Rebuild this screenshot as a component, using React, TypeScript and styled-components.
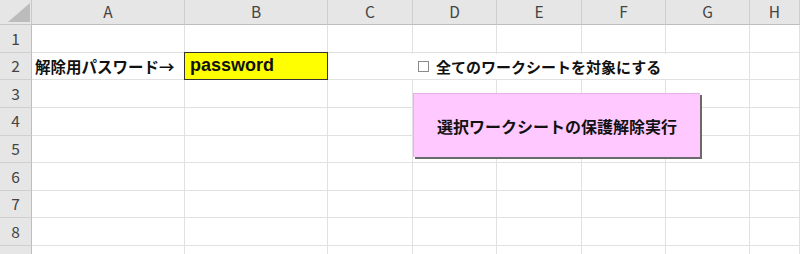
import React from 'react';
import styled, { createGlobalStyle } from 'styled-components';

const cols = ['A', 'B', 'C', 'D', 'E', 'F', 'G', 'H'];
const colWidths = [153, 143, 85, 84, 85, 84, 84, 50];
const rows = [1, 2, 3, 4, 5, 6, 7, 8, 9];

const GlobalStyle = createGlobalStyle`
  html, body {
    margin: 0;
    padding: 0;
    background: #ffffff;
    overflow: hidden;
  }
  body {
    font-family: "Noto Sans CJK JP", "Noto Sans", sans-serif;
  }
`;

export default function App() {
  return (
    <>
      <GlobalStyle />
      <Sheet>
        <Grid>
          <Corner>
            <svg width="32" height="25" viewBox="0 0 32 25">
              <polygon points="8,22 30,22 30,3" fill="#bcbcbc" />
            </svg>
          </Corner>
          {cols.map((c) => (
            <ColHead key={c}>{c}</ColHead>
          ))}
          {rows.map((r) => (
            <React.Fragment key={r}>
              <RowHead>{r}</RowHead>
              {cols.map((c) => {
                if (r === 2 && c === 'A') return <Cell key={c}><Label>解除用パスワード→</Label></Cell>;
                if (r === 2 && c === 'B') return <InputCell key={c}>password</InputCell>;
                return <Cell key={c} />;
              })}
            </React.Fragment>
          ))}
        </Grid>
        <CheckControl>
          <Box />
          <CheckText>全てのワークシートを対象にする</CheckText>
        </CheckControl>
        <RunButton>選択ワークシートの保護解除実行</RunButton>
      </Sheet>
    </>
  );
}

const Sheet = styled.div`
  position: relative;
  width: 800px;
  height: 254px;
  overflow: hidden;
  background: #ffffff;
`;

const Grid = styled.div`
  display: grid;
  grid-template-columns: 32px ${colWidths.map((w) => `${w}px`).join(' ')};
  grid-template-rows: 25px repeat(9, 27.625px);
`;

const Corner = styled.div`
  background: #e6e6e6;
  border-right: 1px solid #c8c8c8;
  border-bottom: 1px solid #c8c8c8;
  box-sizing: border-box;
  svg {
    display: block;
  }
`;

const ColHead = styled.div`
  background: #e6e6e6;
  border-right: 1px solid #cfcfcf;
  border-bottom: 1px solid #bdbdbd;
  box-sizing: border-box;
  display: flex;
  align-items: center;
  justify-content: center;
  font-size: 15.5px;
  color: #444444;
  line-height: 1;
`;

const RowHead = styled.div`
  background: #e6e6e6;
  border-right: 1px solid #bdbdbd;
  border-bottom: 1px solid #cfcfcf;
  box-sizing: border-box;
  display: flex;
  align-items: center;
  justify-content: center;
  font-size: 15.5px;
  color: #444444;
  line-height: 1;
`;

const Cell = styled.div`
  border-right: 1px solid #e1e1e1;
  border-bottom: 1px solid #e1e1e1;
  box-sizing: border-box;
  display: flex;
  align-items: center;
  overflow: visible;
  white-space: nowrap;
`;

const Label = styled.span`
  padding-left: 3px;
  font-size: 15.5px;
  font-weight: 700;
  color: #111111;
`;

const InputCell = styled.div`
  background: #ffff00;
  border: 1px solid #333333;
  margin: -1px 0 0 -1px;
  box-sizing: border-box;
  display: flex;
  align-items: center;
  padding-left: 5px;
  font-family: "Liberation Sans", Arial, sans-serif;
  font-size: 18px;
  font-weight: 700;
  color: #111111;
`;

const CheckControl = styled.div`
  position: absolute;
  left: 405px;
  top: 54px;
  width: 335px;
  height: 25px;
  background: #ffffff;
  display: flex;
  align-items: center;
  gap: 7px;
  padding-left: 13px;
  box-sizing: border-box;
`;

const Box = styled.div`
  width: 11px;
  height: 11px;
  border: 1px solid #8a8a8a;
  background: #ffffff;
  box-sizing: border-box;
`;

const CheckText = styled.span`
  font-size: 15px;
  font-weight: 700;
  color: #111111;
  white-space: nowrap;
`;

const RunButton = styled.div`
  position: absolute;
  left: 413px;
  top: 93px;
  width: 287px;
  height: 64px;
  background: #ffc8ff;
  box-shadow: 2px 2px 0 #6a6a6a;
  border-top: 1px solid #e8b0e8;
  border-left: 1px solid #e8b0e8;
  box-sizing: border-box;
  display: flex;
  align-items: center;
  justify-content: center;
  font-size: 16px;
  font-weight: 700;
  color: #111111;
  white-space: nowrap;
`;
